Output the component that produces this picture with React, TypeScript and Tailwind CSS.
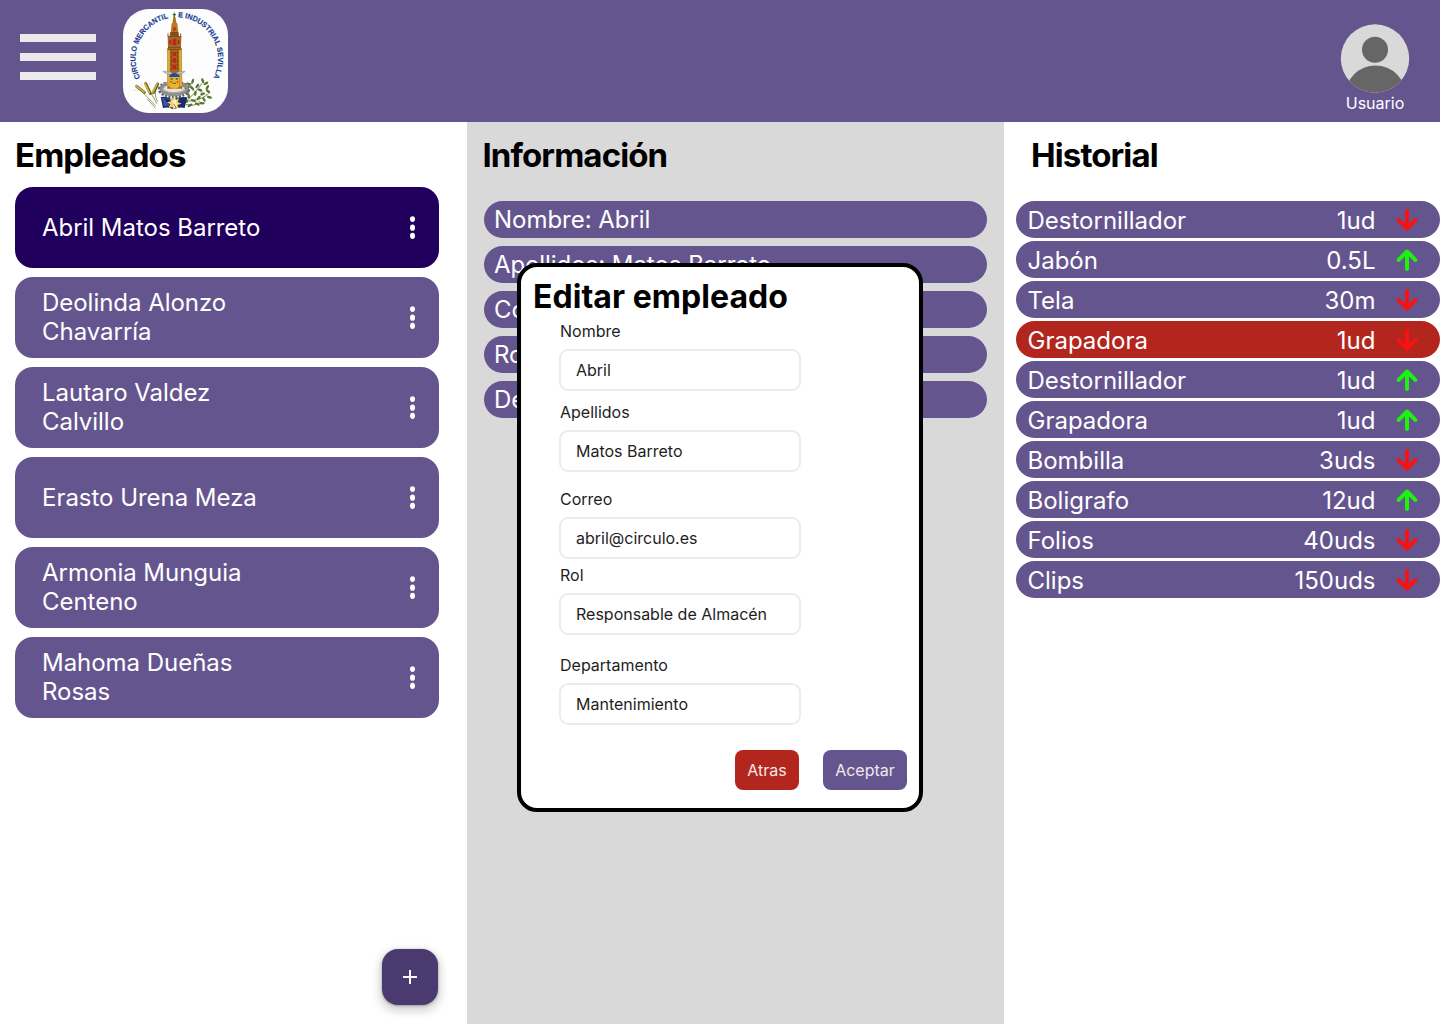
import React from "react";

const employees = [
  "Abril Matos Barreto",
  "Deolinda Alonzo Chavarría",
  "Lautaro Valdez Calvillo",
  "Erasto Urena Meza",
  "Armonia Munguia Centeno",
  "Mahoma Dueñas Rosas",
];

const info = [
  "Nombre: Abril",
  "Apellidos: Matos Barreto",
  "Correo: abril@circulo.es",
  "Rol: Responsable de Almacén",
  "Departamento: Mantenimiento",
];

const history = [
  { item: "Destornillador", qty: "1ud", up: false },
  { item: "Jabón", qty: "0.5L", up: true },
  { item: "Tela", qty: "30m", up: false },
  { item: "Grapadora", qty: "1ud", up: false, alert: true },
  { item: "Destornillador", qty: "1ud", up: true },
  { item: "Grapadora", qty: "1ud", up: true },
  { item: "Bombilla", qty: "3uds", up: false },
  { item: "Boligrafo", qty: "12ud", up: true },
  { item: "Folios", qty: "40uds", up: false },
  { item: "Clips", qty: "150uds", up: false },
];

const fields = [
  { label: "Nombre", value: "Abril", gap: "mt-0" },
  { label: "Apellidos", value: "Matos Barreto", gap: "mt-[10px]" },
  { label: "Correo", value: "abril@circulo.es", gap: "mt-4" },
  { label: "Rol", value: "Responsable de Almacén", gap: "mt-[5px]" },
  { label: "Departamento", value: "Mantenimiento", gap: "mt-[19px]" },
];

function Logo() {
  return (
    <svg viewBox="15 15 315 312" className="h-[104px] w-[105px] rounded-[26px] bg-[#fdfdfd]">
      <defs>
        <path id="arcLeft" d="M67 222A124 124 0 0 1 156 42" />
        <path id="arcRight" d="M180 40A124 124 0 0 1 281 230" />
      </defs>
      <g fill="#1b3f94" stroke="#1b3f94" strokeWidth="0.5" fontFamily="Liberation Sans, sans-serif" fontWeight="700" fontSize="22.5">
        <text><textPath href="#arcLeft" textLength="229" lengthAdjust="spacingAndGlyphs">CIRCULO MERCANTIL</textPath></text>
        <text><textPath href="#arcRight" textLength="250" lengthAdjust="spacingAndGlyphs">E INDUSTRIAL SEVILLA</textPath></text>
      </g>
      {/* wheat */}
      <g fill="none" strokeLinecap="round">
        <path d="M60 250L112 304M84 240L116 298M120 240Q104 268 118 292M88 285L112 312" stroke="#7f8a3c" strokeWidth="2.5" />
        <path d="M56 247L79 265M83 239L97 268M119 240L106 266" stroke="#5f5726" strokeWidth="9" />
        <path d="M54 246L78 264M81 238L95 267M117 239L104 266" stroke="#c8b03e" strokeWidth="6" strokeDasharray="3 4" />
        <path d="M72 238L66 246M98 236l-6 8M46 258l14 2M128 246l-6 10" stroke="#c9c7b0" strokeWidth="1.5" />
      </g>
      {/* laurel branch */}
      <path d="M194 300Q226 276 258 230M196 290Q236 296 272 270M204 302Q226 308 248 296M214 282Q204 256 220 236" stroke="#5b7033" strokeWidth="2.5" fill="none" />
      <g fill="#58752f">
        {[
          [212, 240, 20], [224, 232, 110], [222, 252, 40], [238, 246, 130], [254, 230, 70], [264, 238, 150],
          [246, 258, 20], [232, 268, 100], [254, 270, 160], [270, 262, 40], [274, 280, 10], [258, 286, 60],
          [242, 282, 130], [226, 290, 20], [212, 276, 80], [238, 300, 30], [216, 304, 150], [252, 298, 0],
          [206, 260, 60], [268, 250, 120], [204, 290, 50],
        ].map(([x, y, r], i) => (
          <ellipse key={i} cx={x} cy={y} rx="8" ry="3.8" transform={`rotate(${r} ${x} ${y})`} />
        ))}
      </g>
      <g fill="#a3b770">
        {[[218, 244], [240, 252], [260, 236], [250, 264], [266, 272], [232, 286], [214, 284], [244, 292], [226, 260]].map(([x, y], i) => (
          <ellipse key={i} cx={x} cy={y} rx="4" ry="2" />
        ))}
      </g>
      {/* gear */}
      <ellipse cx="168" cy="256" rx="42" ry="20" fill="none" stroke="#5d5d5d" strokeWidth="13" strokeDasharray="6 4" />
      <ellipse cx="168" cy="254" rx="39" ry="18" fill="none" stroke="#8d8d8d" strokeWidth="9" />
      <ellipse cx="168" cy="253" rx="32" ry="13" fill="#e9e5dc" stroke="#555" strokeWidth="1.5" />
      {/* tower */}
      <path d="M169 26v16M164 32h10" stroke="#3e6f43" strokeWidth="4" />
      <path d="M166 38h6l4 22h-13z" fill="#ad741c" />
      <path d="M161 58h17l3 28h-23z" fill="#b47a26" />
      <path d="M157 84h24l2 16h-28z" fill="#8a4d18" />
      <path d="M149 97h41l-1 36h-39z" fill="#a96b28" />
      <path d="M148 132h43l2 122h-45z" fill="#a8661c" />
      <path d="M149 135h7l-1 112h-7zM183 135h7l2 112h-7z" fill="#dfae38" />
      <path d="M166 70h7v10h-7zM154 107h6v14h-6zM164 104h11v20h-11zM179 107h6v14h-6zM164 144h11v12h-11zM164 162h11v14h-11zM164 182h11v14h-11z" fill="#bd251d" />
      <path d="M149 98h41M150 130h39M149 137h41M159 86h21" stroke="#70501e" strokeWidth="3" />
      <path d="M150 96v-8M157 96v-8M181 96v-8M188 96v-8" stroke="#9c5b26" strokeWidth="3" />
      <path d="M160 142v58M179 142v58" stroke="#70420f" strokeWidth="3" strokeDasharray="8 4" />
      {/* winged helmet and face */}
      <path d="M134 202q24-2 30 6h8q10-8 30-6-8 10-26 10h-16q-18-1-26-10z" fill="#b9bcc0" stroke="#70747a" strokeWidth="1" />
      <path d="M153 220q4-13 16-13t17 13z" fill="#2449a5" />
      <path d="M154 219h30v30q-15 10-30 0z" fill="#e9b52d" />
      <path d="M158 222h7v5h-7zM173 222h7v5h-7zM164 236h10v4h-10z" fill="#527e3a" />
      <path d="M157 230h5v7h-5zM176 230h5v7h-5z" fill="#d65d28" />
      {/* open book */}
      <path d="M128 279q20-3 39 7 21-10 41-6l-8 32q-18-4-34 4-16-8-31-4z" fill="#1e2a6c" />
      <path d="M132 281q18 0 33 8l-2 20q-14-5-25-3z" fill="#3d55a0" />
      <path d="M136 283l26 8-4 15z" fill="#17225d" />
      <path d="M168 275l4 14 12-7-5 12 12 5-13 4 5 12-12-6-4 10-4-11-12 5 6-12-10-6 12-3-4-12 10 7z" fill="#f1d86c" />
      <path d="M163 290l10-5 4 21-9 8z" fill="#fff1ba" />
      <path d="M166 299l8 11" stroke="#c65349" strokeWidth="3" />
    </svg>
  );
}

function Arrow({ up }: { up: boolean }) {
  return (
    <svg
      viewBox="0 0 22 22"
      className={up ? "h-[22px] w-[22px] text-[#1df310]" : "h-[22px] w-[22px] text-[#f81212]"}
      fill="none"
      stroke="currentColor"
      strokeWidth="4"
      strokeLinecap="round"
      strokeLinejoin="round"
    >
      <path d={up ? "M11 20V3M2.7 10.8L11 2.5L19.3 10.8" : "M11 2V19M2.7 11.2L11 19.5L19.3 11.2"} />
    </svg>
  );
}

function Title({ children }: { children: React.ReactNode }) {
  return <h2 className="text-[33px] leading-10 font-bold tracking-[-0.9px] text-black">{children}</h2>;
}

function EditDialog() {
  return (
    <div className="absolute top-[263px] left-[517px] flex h-[549px] w-[406px] flex-col rounded-[20px] border-4 border-black bg-white pr-3 pl-3">
      <h2 className="mt-[10px] text-[32px] leading-[39px] font-bold tracking-[0.05px] text-black">Editar empleado</h2>
      <form className="mt-[4px] ml-[26px] flex w-[242px] flex-col">
        {fields.map((f) => (
          <div key={f.label} className={f.gap}>
            <label className="block pl-px text-base leading-[22px] text-[#1e1e1e]">{f.label}</label>
            <div className="mt-[7px] flex h-[42px] items-center rounded-[9px] border-2 border-[#ececec] bg-white pl-[15px] text-base leading-none text-[#1e1e1e]">
              {f.value}
            </div>
          </div>
        ))}
      </form>
      <div className="mt-[25px] flex justify-end gap-6">
        <button type="button" className="h-10 w-16 rounded-lg bg-[#b3261e] text-base leading-none text-[#f3e8ea]">Atras</button>
        <button type="button" className="h-10 w-[84px] rounded-lg bg-[#65558f] text-base leading-none text-[#f3e8ea]">Aceptar</button>
      </div>
    </div>
  );
}

export default function App() {
  return (
    <div className="relative flex h-[1024px] w-[1440px] flex-col overflow-hidden bg-white font-['Inter',sans-serif]">
      <header className="flex h-[122px] shrink-0 items-start bg-[#65558f] pl-5">
        <button type="button" aria-label="Menú" className="mt-[34px] flex w-[76px] flex-col gap-[11px]">
          <span className="h-2 w-full bg-[#ebe9ec]" />
          <span className="h-2 w-full bg-[#ebe9ec]" />
          <span className="h-2 w-full bg-[#ebe9ec]" />
        </button>
        <div className="mt-[9px] ml-[27px]"><Logo /></div>
        <div className="mt-6 mr-[30px] ml-auto flex flex-col items-center">
          <svg viewBox="0 0 70 70" className="h-[70px] w-[70px]">
            <defs>
              <clipPath id="avatar"><circle cx="35" cy="34.5" r="34.2" /></clipPath>
            </defs>
            <circle cx="35" cy="34.5" r="34.2" fill="#d9d9d9" />
            <circle cx="35" cy="25.8" r="13" fill="#666" />
            <circle cx="35.5" cy="72" r="30.5" fill="#666" clipPath="url(#avatar)" />
          </svg>
          <span className="-mt-px text-base leading-5 text-white">Usuario</span>
        </div>
      </header>

      <main className="flex flex-1">
        <section className="flex w-[467px] flex-col pt-[13px] pr-7 pb-[19px] pl-[15px]">
          <Title>Empleados</Title>
          <ul className="mt-3 flex flex-col gap-[9px]">
            {employees.map((name, i) => (
              <li
                key={name}
                className={`flex h-[81px] items-center justify-between rounded-[18px] pr-[22px] pl-[27px] text-white ${i === 0 ? "bg-[#21005d]" : "bg-[#65558f]"}`}
              >
                <span className={`w-[230px] text-2xl leading-[29px] font-normal tracking-[-0.03px] ${name.length > 20 || i === 5 ? "-mt-px" : ""}`}>{name}</span>
                <svg viewBox="0 0 8 24" className="h-6 w-2" fill="currentColor">
                  <ellipse cx="3.5" cy="3.1" rx="2.5" ry="2.8" />
                  <ellipse cx="3.5" cy="11.7" rx="2.5" ry="3.1" />
                  <ellipse cx="3.5" cy="19.8" rx="2.5" ry="3.1" />
                </svg>
              </li>
            ))}
          </ul>
          <button
            type="button"
            aria-label="Añadir"
            className="mt-auto mr-px flex h-14 w-14 items-center justify-center self-end rounded-2xl bg-[#4a3a70] shadow-[0_4px_8px_3px_rgba(0,0,0,0.15),0_1px_3px_rgba(0,0,0,0.3)]"
          >
            <svg viewBox="0 0 14 14" className="h-3.5 w-3.5" fill="none" stroke="white" strokeWidth="2">
              <path d="M7 0V14M0 7H14" />
            </svg>
          </button>
        </section>

        <section className="w-[537px] bg-[#d9d9d9] pt-[13px] pr-[17px] pl-[17px]">
          <div className="-ml-[1.5px]"><Title>Información</Title></div>
          <ul className="mt-[26px] flex flex-col gap-2">
            {info.map((line) => (
              <li key={line} className="h-[37px] rounded-[18.5px] bg-[#65558f] pl-[10px] text-2xl leading-[37px] font-normal tracking-[-0.03px] text-white">
                {line}
              </li>
            ))}
          </ul>
        </section>

        <section className="w-[436px] pt-[13px] pl-3">
          <div className="pl-[15px]"><Title>Historial</Title></div>
          <ul className="mt-[26px] flex flex-col gap-[3px]">
            {history.map((h, i) => (
              <li
                key={i}
                className={`flex h-[37px] items-center rounded-[18.5px] pr-[22px] pl-[11.5px] text-2xl leading-none font-normal text-white ${h.alert ? "bg-[#b3261e]" : "bg-[#65558f]"}`}
              >
                <span className="pt-[2px]">{h.item}</span>
                <span className="mr-[20.5px] ml-auto pt-[2px]">{h.qty}</span>
                <Arrow up={h.up} />
              </li>
            ))}
          </ul>
        </section>
      </main>
      <EditDialog />
    </div>
  );
}
